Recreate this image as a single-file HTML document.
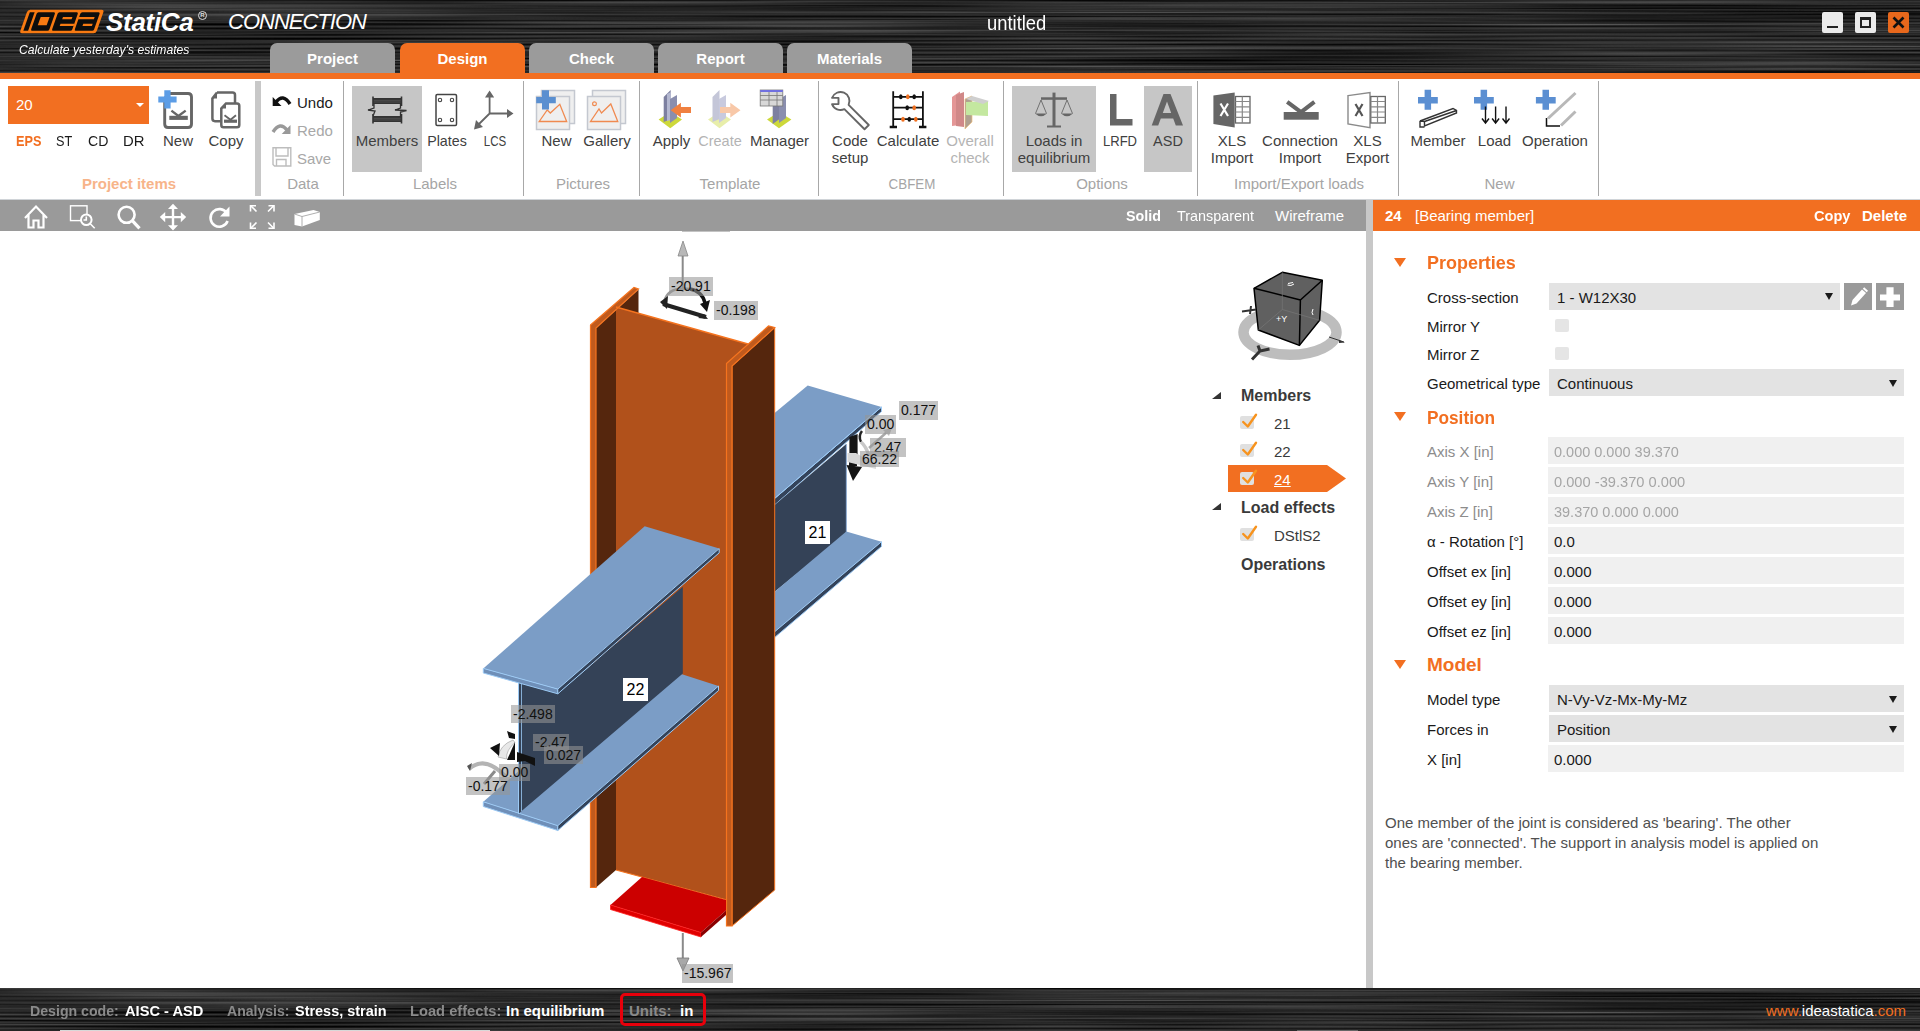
<!DOCTYPE html>
<html><head><meta charset="utf-8">
<style>
*{margin:0;padding:0;box-sizing:border-box}
html,body{width:1920px;height:1031px;overflow:hidden;background:#fff;font-family:"Liberation Sans",sans-serif;position:relative}
.a{position:absolute;white-space:nowrap}
.c{transform:translateX(-50%)}
#title{left:0;top:0;width:1920px;height:73px}
#oline{left:0;top:73px;width:1920px;height:6px;background:#f26f21}
.tab{top:43px;height:30px;width:125px;border-radius:7px 7px 0 0;background:#9b9b9b;color:#fff;font-weight:bold;font-size:15px;text-align:center;line-height:31px}
.tab.on{background:#f26f21}
#ribbon{left:0;top:79px;width:1920px;height:121px;background:#fff;border-bottom:1px solid #d0d4d8}
.sep{top:81px;width:1px;height:115px;background:#a8a8a8}
.rt{font-size:15px;color:#404040;line-height:17px}
.gl{font-size:15px;color:#a5a5a5;top:175px;line-height:17px}
.hl{background:#c6c6c6}
#vtb{left:0;top:200px;width:1366px;height:31px;background:#9a9a9a}
#split{left:1366px;top:200px;width:7px;height:788px;background:#c8c8c8}
#phdr{left:1373px;top:200px;width:547px;height:31px;background:#f26f21}
.pt{font-size:15px;color:#1a1a1a}
.sec{font-size:19px;font-weight:bold;color:#f26f21}
.tri{width:0;height:0;border-left:6.5px solid transparent;border-right:6.5px solid transparent;border-top:9px solid #f26f21}
.dd{left:1549px;width:355px;height:27px;background:#e3e3e3}
.tb{left:1548px;width:356px;height:27px;background:#f0f0f0}
.ddarr{width:0;height:0;border-left:4.4px solid transparent;border-right:4.4px solid transparent;border-top:7px solid #1a1a1a}
#status{left:0;top:988px;width:1920px;height:43px}
.st{font-size:15px;font-weight:bold;top:1002px}
.lbl{background:rgba(149,149,149,.57);color:#111;font-family:"Liberation Sans",sans-serif;font-size:14px;line-height:19px;padding:0 2px}
</style></head><body>

<!-- TITLE BAR -->
<svg class="a" style="left:0;top:0" width="1920" height="73"><defs>
<filter id="br" x="0" y="0" width="100%" height="100%" color-interpolation-filters="sRGB">
<feTurbulence type="fractalNoise" baseFrequency="0.002 0.5" numOctaves="3" seed="3"/>
<feColorMatrix type="saturate" values="0"/>
<feComponentTransfer><feFuncR type="linear" slope="0.6" intercept="-0.14"/><feFuncG type="linear" slope="0.6" intercept="-0.14"/><feFuncB type="linear" slope="0.6" intercept="-0.14"/><feFuncA type="linear" slope="0" intercept="1"/></feComponentTransfer>
</filter></defs><rect width="1920" height="73" fill="#000" filter="url(#br)"/></svg>
<div id="oline" class="a"></div>

<!-- logo -->
<svg class="a" style="left:0;top:0" width="420" height="70" viewBox="0 0 420 70">
<g transform="translate(0,33.2) skewX(-19.3) translate(0,-33.2)">
<rect x="19.5" y="9.7" width="76.5" height="23.5" rx="2.5" fill="#f77a12"/>
<rect x="22.5" y="12.3" width="4.8" height="18.5" fill="#0d0d0d"/>
<rect x="29.8" y="12.3" width="18.3" height="18.5" rx="1.5" fill="#0d0d0d"/>
<rect x="35" y="16.9" width="8.9" height="8.4" fill="#f77a12"/>
<rect x="50.8" y="12.3" width="20.2" height="18.5" rx="1.5" fill="#0d0d0d"/>
<rect x="57.3" y="16.9" width="9.4" height="2.4" fill="#f77a12"/>
<rect x="57.2" y="23.8" width="14" height="2.3" fill="#f77a12"/>
<rect x="73.5" y="12.3" width="19.3" height="18.5" rx="1.5" fill="#0d0d0d"/>
<rect x="73" y="16.9" width="16" height="2.4" fill="#f77a12"/>
<rect x="80" y="23.8" width="9.4" height="2.3" fill="#f77a12"/>
</g>
</svg>
<div class="a" style="left:106px;top:6.5px;font-size:26px;line-height:30px;font-weight:bold;font-style:italic;color:#fff;letter-spacing:-0.3px">StatiCa</div>
<div class="a" style="left:198px;top:11px;width:9px;height:9px;border:1.2px solid #ddd;border-radius:50%;font-size:6px;line-height:7px;text-align:center;color:#ddd;font-weight:bold">R</div>
<div class="a" style="left:228px;top:9px;font-size:22px;line-height:26px;font-style:italic;color:#fff;letter-spacing:-1px">CONNECTION</div>
<div class="a" id="tag" style="left:19px;top:42px;font-size:13px;line-height:15px;font-style:italic;color:#fff;transform-origin:0 0;transform:scaleX(0.934)">Calculate yesterday's estimates</div>
<!-- window buttons -->
<div class="a" style="left:1822px;top:12px;width:21px;height:21px;background:#ebebeb;border-radius:2px"></div>
<div class="a" style="left:1827px;top:26px;width:11px;height:2px;background:#222"></div>
<div class="a" style="left:1855px;top:12px;width:21px;height:21px;background:#ebebeb;border-radius:2px"></div>
<div class="a" style="left:1860px;top:17px;width:11px;height:11px;border:2px solid #222;border-top-width:3px"></div>
<div class="a" style="left:1888px;top:12px;width:21px;height:21px;background:#e8681c;border-radius:2px"></div>
<svg class="a" style="left:1888px;top:12px" width="21" height="21"><path d="M5.5 5.5 L15.5 15.5 M15.5 5.5 L5.5 15.5" stroke="#111" stroke-width="2.6"/></svg>

<div class="a tab" style="left:270px">Project</div>
<div class="a tab on" style="left:400px">Design</div>
<div class="a tab" style="left:529px">Check</div>
<div class="a tab" style="left:658px">Report</div>
<div class="a tab" style="left:787px">Materials</div>

<div class="a" style="left:987px;top:11.5px;font-size:20px;line-height:22px;color:#fff;transform-origin:0 0;transform:scaleX(0.92)">untitled</div>

<!-- RIBBON -->
<div id="ribbon" class="a"></div>


<div class="a hl" style="left:352px;top:86px;width:70px;height:86px"></div>
<div class="a hl" style="left:1012px;top:86px;width:84px;height:86px"></div>
<div class="a hl" style="left:1144px;top:86px;width:48px;height:86px"></div>
<!-- ribbon icons -->
<svg class="a" style="left:0;top:0" width="1600" height="200" viewBox="0 0 1600 200">
<!-- New (project) -->
<path d="M169 93.5 H188 Q191.5 93.5 191.5 97 V124 Q191.5 127.5 188 127.5 H168 Q164.7 127.5 164.7 124 V98.5 Z" fill="none" stroke="#666" stroke-width="2.9"/>
<path d="M171.4 110.6 L178.4 116 L185.7 110.6" fill="none" stroke="#666" stroke-width="2.4"/>
<rect x="169.3" y="115.8" width="18.5" height="4.1" fill="#666"/>
<path d="M164.3 90.3 H170.6 V96.5 H176.6 V102.5 H170.6 V108.5 H164.3 V102.5 H158.3 V96.5 H164.3 Z" fill="#5c9de6"/>
<!-- Copy -->
<path d="M217 92.5 H232.5 Q235 92.5 235 95 V103 M221 121.2 H215 Q212.4 121.2 212.4 118.6 V98.5 L217 92.5" fill="none" stroke="#666" stroke-width="2.5"/>
<path d="M212.4 98.5 L217 92.5 V98.5 Z" fill="#666"/>
<path d="M226 103.5 H237 Q239.3 103.5 239.3 105.8 V125 Q239.3 127.3 237 127.3 H223.5 Q221.3 127.3 221.3 125 V108.5 Z" fill="#fff" stroke="#666" stroke-width="2.5"/>
<path d="M221.3 108.5 L226 103.5 V108.5 Z" fill="#666"/>
<path d="M224.5 115.2 L230.5 119.8 L236 115.2" fill="none" stroke="#666" stroke-width="1.8"/>
<rect x="224" y="119.6" width="13" height="3.2" fill="#666"/>
<!-- Undo / Redo / Save -->
<path d="M276 102 Q283 93 290 104" fill="none" stroke="#111" stroke-width="3.4"/>
<path d="M272.7 97 L272.7 106 L281.5 106 Z" fill="#111"/>
<path d="M287 130 Q280 121 273 132" fill="none" stroke="#999" stroke-width="3.4"/>
<path d="M290.5 125 L290.5 134 L281.7 134 Z" fill="#999"/>
<path d="M273 147.8 H290.8 V166 H274.5 L273 164.5 Z M276 148 V156 H288 V148 M276.5 166 V159.5 H286 V166" fill="none" stroke="#bdbdbd" stroke-width="1.4"/>
<!-- Members -->
<rect x="373" y="98" width="28.5" height="6" fill="#333"/>
<rect x="373" y="116" width="28.5" height="6" fill="#333"/>
<path d="M373 100.3 H401.5 M373 102 H401.5 M373 118.3 H401.5 M373 120 H401.5" stroke="#5a5a5a" stroke-width="0.7"/>
<path d="M373 96.5 V106 M401.5 96.5 V106 M373 114 V123.5 M401.5 114 V123.5" stroke="#333" stroke-width="1.6"/>
<path d="M374 104 V108 L368 110 L375 111 L373 116 M400.5 104 V108 L395 110 L406.5 110.5 L400.5 112 V116" fill="none" stroke="#333" stroke-width="1.3"/>
<!-- Plates -->
<rect x="436" y="94.5" width="20.5" height="31" rx="1.2" fill="#fff" stroke="#444" stroke-width="1.5"/>
<g fill="none" stroke="#444" stroke-width="1.1"><circle cx="440" cy="100" r="1.7"/><circle cx="452" cy="100" r="1.7"/><circle cx="440" cy="120" r="1.7"/><circle cx="452" cy="120" r="1.7"/></g>
<!-- LCS -->
<path d="M489.6 113.5 V96 M489.6 113.5 H508 M489.6 113.5 L478 125" fill="none" stroke="#666" stroke-width="1.8"/>
<path d="M485 97.5 L489.6 90.5 L494.2 97.5 Z M507 109 L513.5 113.5 L507 118 Z M476 120 L474 129.5 L483 127 Z" fill="#666"/>
<!-- Pictures New -->
<rect x="541.5" y="90.5" width="33" height="33" fill="#efefef" stroke="#c4c8d0" stroke-width="1.5"/>
<rect x="536.5" y="96.5" width="33" height="33" fill="#efefef" stroke="#c4c8d0" stroke-width="1.5"/>
<path d="M539.2 121.5 L547.2 110 L550.3 113 L559.8 104.3 L566.7 121.5 Z" fill="none" stroke="#f08a50" stroke-width="1.3"/>
<path d="M542 90.3 H549 V96.9 H555.8 V103.2 H549 V109.5 H542 V103.2 H536.2 V96.9 H542 Z" fill="#5a8fd0"/>
<!-- Gallery -->
<rect x="592.5" y="90.5" width="33" height="33" fill="#efefef" stroke="#c4c8d0" stroke-width="1.5"/>
<rect x="587.5" y="96.5" width="33" height="33" fill="#efefef" stroke="#c4c8d0" stroke-width="1.5"/>
<circle cx="594.5" cy="103.8" r="1.9" fill="none" stroke="#f08a50" stroke-width="1.2"/>
<path d="M590.5 121.5 L599 109 L601.5 113 L610.8 104 L617.8 121.5 Z" fill="none" stroke="#f08a50" stroke-width="1.3"/>
<!-- Apply -->
<path d="M658.6 119.6 L670.3 112 L682 119.6 L670.3 128.2 Z" fill="#cdd83a"/>
<path d="M663.7 97 L670.7 89.9 V119 L663.7 122 Z" fill="#7d80a0"/>
<path d="M667 94 L671 92 V120 L667 121 Z" fill="#b4b8d0"/>
<path d="M670 98.9 L677 95 V118 L670 123 Z" fill="#8a8eae"/>
<path d="M670.7 110.2 L680.9 102.8 V107 H691 V113 H680.9 V117.5 Z" fill="#f08040"/>
<!-- Create -->
<path d="M708 119.6 L719.5 112 L731 119.6 L719.5 128.2 Z" fill="#e8eeaa"/>
<path d="M712.5 97 L719.5 89.9 V119 L712.5 122 Z" fill="#c4c6d8"/>
<path d="M719 98.9 L726 95 V118 L719 123 Z" fill="#c8cade"/>
<path d="M740.5 110.2 L730.3 102.8 V107 H720 V113 H730.3 V117.5 Z" fill="#f8c8a8"/>
<!-- Manager -->
<path d="M767 119.6 L779 112 L791.4 119.6 L779 128.2 Z" fill="#cdd83a"/>
<path d="M772.7 100 L779.5 95 V119 L772.7 124 Z" fill="#7d80a0"/>
<path d="M779 99 L786 95 V118 L779 123 Z" fill="#8a8eae"/>
<rect x="760.2" y="90" width="22.6" height="16" fill="#d8d8d8" stroke="#777" stroke-width="0.8"/>
<rect x="760.2" y="90" width="22.6" height="2" fill="#7070e0"/>
<path d="M760.2 95.5 H782.8 M760.2 100 H782.8 M769 92 V106 M777 92 V106" stroke="#777" stroke-width="0.8"/>
<!-- Code setup wrench -->
<path d="M848.62 104.88 A9 9 0 1 0 832.05 97.9 L838.5 97.9 L838.5 104.1 L832.05 104.1 A9 9 0 0 0 844.38 109.12 L864.54 129.28 L868.78 125.04 Z" fill="none" stroke="#666" stroke-width="1.9" stroke-linejoin="round"/>
<!-- Calculate abacus -->
<path d="M893.2 91.3 V127 M922.9 91.3 V127 M893.2 96.8 H922.9 M893.2 107.7 H922.9 M893.2 119.2 H922.9" stroke="#111" stroke-width="1.8"/>
<path d="M889.7 127 H897 M919 127 H926.4" stroke="#111" stroke-width="2.5"/>
<g fill="#111"><ellipse cx="900.8" cy="96.8" rx="1.8" ry="2.5"/><ellipse cx="914.2" cy="96.8" rx="1.8" ry="2.5"/><ellipse cx="907.2" cy="107.7" rx="1.8" ry="2.5"/><ellipse cx="909.3" cy="119.2" rx="1.8" ry="2.5"/></g>
<g fill="#f07020"><ellipse cx="907.8" cy="96.8" rx="1.8" ry="2.5"/><ellipse cx="914.2" cy="107.7" rx="1.8" ry="2.5"/><ellipse cx="903" cy="119.2" rx="1.8" ry="2.5"/><ellipse cx="915.8" cy="119.2" rx="1.8" ry="2.5"/></g>
<!-- Overall check -->
<path d="M952 97 L960 91.5 V125 L952 126 Z" fill="#e49696"/>
<path d="M956 95 L964 92 V127 L956 126 Z" fill="#d08888"/>
<path d="M965 99 L972 96 V122 L965 129 Z" fill="#b0a090" stroke="#f0c080" stroke-width="0.7"/>
<path d="M966 102 L988 101 L988 116 L966 115 Z" fill="#c4e8a0"/>
<path d="M966 99 L972 96 L989 101 L983 104 Z" fill="#cfcfcf"/>
<!-- Scale -->
<g fill="#666"><rect x="1052.5" y="92.6" width="3" height="34"/><rect x="1041" y="97.3" width="26" height="2.5"/><rect x="1047" y="125.5" width="14" height="2"/></g>
<path d="M1041 100 L1035.5 113.5 M1041 100 L1046.5 113.5 M1067 100 L1061.5 113.5 M1067 100 L1072.5 113.5" stroke="#666" stroke-width="0.9" fill="none"/>
<path d="M1035 113.5 H1047 Q1041 119 1035 113.5 Z M1061 113.5 H1073 Q1067 119 1061 113.5 Z" fill="#666"/>
<!-- L and A -->
<path d="M1110 94 H1116.5 V119 H1132.5 V125.5 H1110 Z" fill="#666"/>
<path d="M1163.5 94 H1170.5 L1183 125.5 H1175.8 L1173.2 118.5 H1160.8 L1158.2 125.5 H1151.7 Z M1162.8 113 H1171.2 L1167 101.5 Z" fill="#666" fill-rule="evenodd"/>
<!-- XLS Import -->
<path d="M1213.4 95.4 L1234.7 92.4 V127.6 L1213.4 124.1 Z" fill="#666"/>
<path d="M1220.5 103.5 L1228 116 M1228 103.5 L1220.5 116" stroke="#fff" stroke-width="2.2"/>
<rect x="1235.5" y="96.5" width="14.5" height="26.5" fill="#fff" stroke="#666" stroke-width="1.3"/>
<path d="M1235.5 101.5 H1250 M1235.5 106.8 H1250 M1235.5 112 H1250 M1235.5 117.3 H1250 M1242.3 96.5 V123" stroke="#888" stroke-width="1.2"/>
<!-- Connection import -->
<path d="M1287.2 101.8 L1301 112.2 L1314.4 101.8" fill="none" stroke="#666" stroke-width="4"/>
<rect x="1283.7" y="112" width="35" height="7.7" fill="#666"/>
<!-- XLS Export -->
<path d="M1348 95.6 L1370 92.5 V127.7 L1348 124 Z" fill="#fff" stroke="#8a8a8a" stroke-width="1.4"/>
<path d="M1355.5 104 L1362.5 116 M1362.5 104 L1355.5 116" stroke="#555" stroke-width="2.2"/>
<rect x="1370.8" y="96.5" width="14.5" height="26.5" fill="#fff" stroke="#666" stroke-width="1.3"/>
<path d="M1370.8 101.5 H1385.3 M1370.8 106.8 H1385.3 M1370.8 112 H1385.3 M1370.8 117.3 H1385.3 M1377.5 96.5 V123" stroke="#888" stroke-width="1.2"/>
<!-- Member -->
<path d="M1420 121 L1453 108.5 L1456.5 110.5 V113 L1424.5 126 V121.5 L1420 121 Z M1424.5 121.5 L1456.5 110.5 M1420 121 V127 H1424.5" fill="none" stroke="#333" stroke-width="1.4"/>
<path d="M1424.6 89.8 H1431.1 V96.9 H1437.8 V103.4 H1431.1 V109.7 H1424.6 V103.4 H1418 V96.9 H1424.6 Z" fill="#5b8fd2"/>
<!-- Load -->
<path d="M1480.6 89.8 H1487.1 V96.9 H1493.8 V103.4 H1487.1 V109.7 H1480.6 V103.4 H1474 V96.9 H1480.6 Z" fill="#5b8fd2"/>
<path d="M1485.5 106.5 V123 M1495.6 106.5 V123 M1506 106.5 V123 M1482 118.5 L1485.5 123 L1489 118.5 M1492.1 118.5 L1495.6 123 L1499.1 118.5 M1502.5 118.5 L1506 123 L1509.5 118.5" fill="none" stroke="#111" stroke-width="1.4"/>
<!-- Operation -->
<path d="M1542.5 89.8 H1549 V96.9 H1555.7 V103.4 H1549 V109.7 H1542.5 V103.4 H1535.9 V96.9 H1542.5 Z" fill="#5b8fd2"/>
<path d="M1548 118.5 L1575.5 93 M1561 125.5 L1575.5 111.5" stroke="#b8b8b8" stroke-width="3"/>
<path d="M1546.5 118 V126 H1560" fill="none" stroke="#111" stroke-width="1.5"/>
</svg>

<!-- ribbon content -->
<div class="a" style="left:8px;top:86px;width:141px;height:38px;background:#f26f21"></div>
<div class="a" style="left:16px;top:96px;font-size:15px;color:#fff;line-height:17px">20</div>
<div class="a" style="left:136px;top:103px;width:0;height:0;border-left:4px solid transparent;border-right:4px solid transparent;border-top:4px solid #fff"></div>
<div class="a rt" style="left:16px;top:132px;color:#f26f21;font-weight:bold;transform-origin:0 0;transform:scaleX(0.846)">EPS</div>
<div class="a rt" style="left:56px;top:132px;color:#1a1a1a;transform-origin:0 0;transform:scaleX(0.847)">ST</div>
<div class="a rt" style="left:88px;top:132px;color:#1a1a1a;transform-origin:0 0;transform:scaleX(0.941)">CD</div>
<div class="a rt" style="left:123px;top:132px;color:#1a1a1a;transform-origin:0 0;transform:scaleX(0.99)">DR</div>
<div class="a rt c" style="left:178px;top:132px">New</div>
<div class="a rt c" style="left:226px;top:132px">Copy</div>
<div class="a gl c" style="left:129px;color:#f7b48a;font-weight:bold">Project items</div>
<div class="a" style="left:255px;top:81px;width:6px;height:115px;background:#c8c8c8"></div>

<div class="a rt" style="left:297px;top:94px;color:#1a1a1a">Undo</div>
<div class="a rt" style="left:297px;top:122px;color:#a8a8a8">Redo</div>
<div class="a rt" style="left:297px;top:150px;color:#a8a8a8">Save</div>
<div class="a gl c" style="left:303px">Data</div>
<div class="a sep" style="left:343px"></div>

<div class="a rt c" style="left:387px;top:132px">Members</div>
<div class="a rt c" style="left:446.5px;top:132px;transform:translateX(-50%) scaleX(0.95)">Plates</div>
<div class="a rt c" style="left:494.5px;top:132px;transform:translateX(-50%) scaleX(0.769)">LCS</div>
<div class="a gl c" style="left:435px">Labels</div>
<div class="a sep" style="left:523px"></div>

<div class="a rt c" style="left:556.5px;top:132px">New</div>
<div class="a rt c" style="left:607px;top:132px">Gallery</div>
<div class="a gl c" style="left:583px">Pictures</div>
<div class="a sep" style="left:639px"></div>

<div class="a rt c" style="left:671.5px;top:132px">Apply</div>
<div class="a rt c" style="left:720px;top:132px;color:#b4b4b4;transform:translateX(-50%) scaleX(0.966)">Create</div>
<div class="a rt c" style="left:779.5px;top:132px">Manager</div>
<div class="a gl c" style="left:730px">Template</div>
<div class="a sep" style="left:818px"></div>

<div class="a rt c" style="left:850px;top:132px;text-align:center">Code<br>setup</div>
<div class="a rt c" style="left:908px;top:132px">Calculate</div>
<div class="a rt c" style="left:970px;top:132px;color:#b4b4b4;text-align:center">Overall<br>check</div>
<div class="a gl c" style="left:912px;transform:translateX(-50%) scaleX(0.892)">CBFEM</div>
<div class="a sep" style="left:1003px"></div>

<div class="a rt c" style="left:1054px;top:132px;text-align:center">Loads in<br>equilibrium</div>
<div class="a rt c" style="left:1120px;top:132px;transform:translateX(-50%) scaleX(0.87)">LRFD</div>
<div class="a rt c" style="left:1168px;top:132px;transform:translateX(-50%) scaleX(0.966)">ASD</div>
<div class="a gl c" style="left:1102px">Options</div>
<div class="a sep" style="left:1197px"></div>

<div class="a rt c" style="left:1232px;top:132px;text-align:center">XLS<br>Import</div>
<div class="a rt c" style="left:1300px;top:132px;text-align:center">Connection<br>Import</div>
<div class="a rt c" style="left:1367.5px;top:132px;text-align:center">XLS<br>Export</div>
<div class="a gl c" style="left:1299px">Import/Export loads</div>
<div class="a sep" style="left:1398px"></div>

<div class="a rt c" style="left:1438px;top:132px">Member</div>
<div class="a rt c" style="left:1494.5px;top:132px">Load</div>
<div class="a rt c" style="left:1555px;top:132px">Operation</div>
<div class="a gl c" style="left:1499.5px">New</div>
<div class="a sep" style="left:1598px"></div>


<!-- 3D MODEL -->
<svg class="a" style="left:0;top:0" width="1366" height="988" viewBox="0 0 1366 988">
<defs><clipPath id="vp"><rect x="0" y="231" width="1366" height="757"/></clipPath></defs>
<g clip-path="url(#vp)">
<!-- beam 21 behind -->
<g stroke-linejoin="round">
<polygon points="774,413.5 807.7,385.5 881.5,407 774,499" fill="#7b9dc6"/>
<polygon points="881.5,407 881.5,411.5 774,505.5 774,499" fill="#34435a" stroke="#9ccaf5" stroke-width="1"/>
<polygon points="774,505.5 846.3,444 846.3,533.7 774,592.3" fill="#344257"/>
<line x1="846.3" y1="444" x2="846.3" y2="534" stroke="#7fa6d6" stroke-width="0.8"/>
<polygon points="774,592.3 846.3,531.5 881.5,541.7 774,632.3" fill="#7b9dc6"/>
<polygon points="881.5,541.7 881.5,546.5 774,638 774,632.3" fill="#34435a" stroke="#9ccaf5" stroke-width="1"/>
<line x1="774" y1="499" x2="881.5" y2="407" stroke="#9ccaf5" stroke-width="1"/>
</g>
<!-- column -->
<polygon points="596,328 638.5,289.5 638.5,313.5 616,307 616,870 596,887.5" fill="#55260d"/>
<polygon points="616,307 748,344 727,363.5 727,900 616,870" fill="#b1511b"/>
<polygon points="732,366 774.7,327.5 774.7,890 732,926" fill="#55260d" stroke="#f5731e" stroke-width="1"/>
<polygon points="590.5,325 634,287.5 638.5,289 596,328 596,887.5 590.5,887.5" fill="#c05a1d" stroke="#f5731e" stroke-width="1.2"/>
<polygon points="726.5,363.5 768.5,326 774.7,327.5 732,366 732,926 726.5,926" fill="#c05a1d" stroke="#f5731e" stroke-width="1.2"/>
<line x1="616" y1="307" x2="748" y2="344" stroke="#f5731e" stroke-width="1.5"/>
<line x1="616" y1="870" x2="727" y2="900" stroke="#f5731e" stroke-width="1.2"/>
<!-- base plate -->
<polygon points="642,877 726,900 726,910.5 701,932.5 610.5,905" fill="#cc0000"/>
<polygon points="610.5,905 701,932.5 701,937 610.5,909.5" fill="#e00000" stroke="#ff2020" stroke-width="0.8"/>
<polygon points="701,932.5 726,910.5 726,915 701,937" fill="#8a0000"/>
<!-- beam 22 front -->
<polygon points="483.3,801.8 644,662 718.5,686 557.8,825.7" fill="#7b9dc6"/>
<polygon points="483.3,801.8 557.8,825.7 557.8,830.5 483.3,806.5" fill="#6f8fb8" stroke="#9ccaf5" stroke-width="1"/>
<polygon points="557.8,825.7 718.5,686 718.5,690.5 557.8,830.5" fill="#34435a" stroke="#9ccaf5" stroke-width="1"/>
<polygon points="519,682 557.8,693.5 682.8,586.7 682.8,673.6 519,813.3" fill="#344257"/>
<line x1="518.5" y1="680" x2="518.5" y2="814" stroke="#9ccaf5" stroke-width="1"/><line x1="521.5" y1="682" x2="521.5" y2="811" stroke="#9ccaf5" stroke-width="0.8"/>
<polygon points="483.3,668.4 644.7,526.2 719.2,548.6 557.8,689.1" fill="#7b9dc6"/>
<polygon points="483.3,668.4 557.8,689.1 557.8,693.8 483.3,673" fill="#6f8fb8" stroke="#9ccaf5" stroke-width="1"/>
<polygon points="557.8,689.1 719.2,548.6 719.2,552.8 557.8,693.8" fill="#34435a" stroke="#9ccaf5" stroke-width="1"/>
<!-- arrows -->
<line x1="682.7" y1="250" x2="682.7" y2="292" stroke="#8a8a8a" stroke-width="2"/>
<polygon points="678,256 683,241 688,256" fill="#b8b8b8" stroke="#888" stroke-width="0.8"/>
<line x1="682.8" y1="933" x2="682.8" y2="962" stroke="#8a8a8a" stroke-width="2"/>
<polygon points="677,958 683,971 689,958" fill="#a8a8a8" stroke="#777" stroke-width="0.8"/>
</g>
</svg>
<!-- moment arrows -->
<svg class="a" style="left:0;top:0" width="960" height="800" viewBox="0 0 960 800">
<path d="M664 302 Q668 286 690 289 Q702 291 705 303" fill="none" stroke="#999" stroke-width="2.5"/>
<path d="M690 289 Q702 291 705 303" fill="none" stroke="#111" stroke-width="3.5"/>
<path d="M700 304 L710 300 L707 312 Z" fill="#111"/>
<path d="M663 304 L706 317" stroke="#222" stroke-width="4"/>
<path d="M660 302 L668 296 L667 309 Z M704 314 L708 319 L698 318 Z" fill="#222"/>
<path d="M849.4 437 L857.6 434 L857.6 456 L849.4 458 Z" fill="#151515"/>
<path d="M849 458 L857 458 L857 466 L849 466 Z" fill="#151515"/>
<path d="M846.5 465 L862 467 L853 481 Z" fill="#151515"/>
<path d="M847.5 453 L856 453 L876 465 L876 469 L847.5 462 Z" fill="#d8d8d8"/>
<path d="M862 431 Q858 436 861 442" fill="none" stroke="#222" stroke-width="2.5"/>
<path d="M861 442 Q866 446 869 456" fill="none" stroke="#c8c8c8" stroke-width="3.5"/>
<path d="M869 448 L887 432" stroke="#aaa" stroke-width="2.5"/>
<path d="M883 430 L892 428 L889 436 Z" fill="#bbb"/>
<path d="M507 731 L515 734 L515 739 L509 738 Z" fill="#111"/>
<path d="M498 757 Q500 745 513 740 L515 742.5 Q506 750 506.5 759 Z" fill="#e8e8e8" stroke="#9a9a9a" stroke-width="0.6"/>
<path d="M490 748 L500 743 L499 756 Z" fill="#111"/>
<path d="M507 760 L515 742 L515 760 Z" fill="#111"/>
<path d="M517 752 L535 758 L535 766 L525 761 L517 762 Z" fill="#111"/>
<path d="M469 769 Q485 755 505 776" fill="none" stroke="#b4b4b4" stroke-width="4"/>
<path d="M467 766 L472 763 L470 771 Z" fill="#555"/>
<path d="M484 784 L495 771" stroke="#8a8a8a" stroke-width="3"/>
</svg>
<div class="a lbl" style="left:682px;top:226px;width:48px;height:6px"></div>
<div class="a lbl" style="left:669px;top:277px;height:19px">-20.91</div>
<div class="a lbl" style="left:714px;top:301px;height:19px">-0.198</div>
<div class="a lbl" style="left:899px;top:401px;height:19px">0.177</div>
<div class="a lbl" style="left:865px;top:415px;height:19px">0.00</div>
<div class="a lbl" style="left:870px;top:438px;height:19px;width:36px;padding-left:4px">2.47</div>
<div class="a lbl" style="left:860px;top:451px;height:16px;line-height:16px">66.22</div>
<div class="a lbl" style="left:511px;top:705px;height:18px">-2.498</div>
<div class="a lbl" style="left:533px;top:734px;height:17px;line-height:17px">-2.47</div>
<div class="a lbl" style="left:544px;top:746px;height:18px">0.027</div>
<div class="a lbl" style="left:499px;top:764px;height:17px;line-height:17px">0.00</div>
<div class="a lbl" style="left:466px;top:777px;height:18px">-0.177</div>
<div class="a lbl" style="left:682px;top:964px;height:19px">-15.967</div>
<div class="a" style="left:805px;top:521px;width:25px;height:23px;background:#fff;color:#000;font-size:16px;line-height:23px;text-align:center">21</div>
<div class="a" style="left:623px;top:678px;width:25px;height:23px;background:#fff;color:#000;font-size:16px;line-height:23px;text-align:center">22</div>

<!-- VIEW TOOLBAR -->
<div id="vtb" class="a"></div>
<div id="split" class="a"></div>
<div id="phdr" class="a"></div>


<!-- STATUS -->
<svg class="a" style="left:0;top:988px" width="1920" height="43"><rect width="1920" height="43" fill="#000" filter="url(#br)"/></svg>

<!-- view toolbar text -->
<div class="a" style="left:1126px;top:207px;font-size:15px;color:#fff;font-weight:bold;line-height:17px;transform-origin:0 0;transform:scaleX(0.952)">Solid</div>
<div class="a" style="left:1177px;top:207px;font-size:15px;color:#fff;line-height:17px;transform-origin:0 0;transform:scaleX(0.958)">Transparent</div>
<div class="a" style="left:1275px;top:207px;font-size:15px;color:#fff;line-height:17px">Wireframe</div>

<!-- panel header -->
<div class="a" style="left:1385px;top:207px;font-size:15px;color:#fff;font-weight:bold;line-height:17px">24</div>
<div class="a" style="left:1415px;top:207px;font-size:15px;color:#fff;line-height:17px">[Bearing member]</div>
<div class="a" style="left:1814px;top:207px;font-size:15px;color:#fff;font-weight:bold;line-height:17px;transform-origin:0 0;transform:scaleX(0.972)">Copy</div>
<div class="a" style="left:1862px;top:207px;font-size:15px;color:#fff;font-weight:bold;line-height:17px">Delete</div>

<!-- Properties -->
<div class="a tri" style="left:1394px;top:258px"></div>
<div class="a sec" style="left:1427px;top:252px;line-height:22px;transform-origin:0 0;transform:scaleX(0.945)">Properties</div>
<div class="a pt" style="left:1427px;top:289px;line-height:17px">Cross-section</div>
<div class="a dd" style="top:283px;width:291px"></div>
<div class="a pt" style="left:1557px;top:289px;line-height:17px">1 - W12X30</div>
<div class="a ddarr" style="left:1825px;top:293px"></div>
<div class="a" style="left:1844px;top:283px;width:28px;height:27px;background:#9a9a9a"></div>
<div class="a" style="left:1876px;top:283px;width:28px;height:27px;background:#9a9a9a"></div>
<div class="a pt" style="left:1427px;top:318px;line-height:17px">Mirror Y</div>
<div class="a" style="left:1555px;top:319px;width:14px;height:13px;background:#e5e5e5;border-radius:2px"></div>
<div class="a pt" style="left:1427px;top:346px;line-height:17px">Mirror Z</div>
<div class="a" style="left:1555px;top:347px;width:14px;height:13px;background:#e5e5e5;border-radius:2px"></div>
<div class="a pt" style="left:1427px;top:375px;line-height:17px">Geometrical type</div>
<div class="a dd" style="top:369px"></div>
<div class="a pt" style="left:1557px;top:375px;line-height:17px">Continuous</div>
<div class="a ddarr" style="left:1889px;top:380px"></div>

<!-- Position -->
<div class="a tri" style="left:1394px;top:412px"></div>
<div class="a sec" style="left:1427px;top:407px;line-height:22px;transform-origin:0 0;transform:scaleX(0.907)">Position</div>
<div class="a tb" style="top:437px"></div>
<div class="a tb" style="top:467px"></div>
<div class="a tb" style="top:497px"></div>
<div class="a tb" style="top:527px"></div>
<div class="a tb" style="top:557px"></div>
<div class="a tb" style="top:587px"></div>
<div class="a tb" style="top:617px"></div>
<div class="a pt" style="left:1427px;top:443px;line-height:17px;color:#8c8c8c">Axis X [in]</div>
<div class="a pt" style="left:1554px;top:443px;line-height:17px;color:#a5a5a5;transform-origin:0 0;transform:scaleX(0.966)">0.000 0.000 39.370</div>
<div class="a pt" style="left:1427px;top:473px;line-height:17px;color:#8c8c8c">Axis Y [in]</div>
<div class="a pt" style="left:1554px;top:473px;line-height:17px;color:#a5a5a5;transform-origin:0 0;transform:scaleX(0.977)">0.000 -39.370 0.000</div>
<div class="a pt" style="left:1427px;top:503px;line-height:17px;color:#8c8c8c">Axis Z [in]</div>
<div class="a pt" style="left:1554px;top:503px;line-height:17px;color:#a5a5a5;transform-origin:0 0;transform:scaleX(0.966)">39.370 0.000 0.000</div>
<div class="a pt" style="left:1427px;top:533px;line-height:17px">&alpha; - Rotation [&deg;]</div>
<div class="a pt" style="left:1554px;top:533px;line-height:17px">0.0</div>
<div class="a pt" style="left:1427px;top:563px;line-height:17px">Offset ex [in]</div>
<div class="a pt" style="left:1554px;top:563px;line-height:17px">0.000</div>
<div class="a pt" style="left:1427px;top:593px;line-height:17px">Offset ey [in]</div>
<div class="a pt" style="left:1554px;top:593px;line-height:17px">0.000</div>
<div class="a pt" style="left:1427px;top:623px;line-height:17px">Offset ez [in]</div>
<div class="a pt" style="left:1554px;top:623px;line-height:17px">0.000</div>

<!-- Model -->
<div class="a tri" style="left:1394px;top:660px"></div>
<div class="a sec" style="left:1427px;top:654px;line-height:22px">Model</div>
<div class="a pt" style="left:1427px;top:691px;line-height:17px">Model type</div>
<div class="a dd" style="top:685px"></div>
<div class="a pt" style="left:1557px;top:691px;line-height:17px">N-Vy-Vz-Mx-My-Mz</div>
<div class="a ddarr" style="left:1889px;top:696px"></div>
<div class="a pt" style="left:1427px;top:721px;line-height:17px">Forces in</div>
<div class="a dd" style="top:715px"></div>
<div class="a pt" style="left:1557px;top:721px;line-height:17px">Position</div>
<div class="a ddarr" style="left:1889px;top:726px"></div>
<div class="a pt" style="left:1427px;top:751px;line-height:17px">X [in]</div>
<div class="a tb" style="top:745px"></div>
<div class="a pt" style="left:1554px;top:751px;line-height:17px">0.000</div>

<div class="a" style="left:1385px;top:813px;font-size:15px;line-height:20px;color:#505050;white-space:normal;width:440px">One member of the joint is considered as 'bearing'. The other ones are 'connected'. The support in analysis model is applied on the bearing member.</div>

<!-- tree -->
<div class="a" style="left:1212px;top:392px;width:0;height:0;border-left:9px solid transparent;border-bottom:7px solid #333"></div>
<div class="a" style="left:1241px;top:387px;font-size:16px;font-weight:bold;color:#3a3a3a;line-height:17px">Members</div>
<div class="a" style="left:1240px;top:416px;width:14px;height:13px;background:#e0e0e0;border-radius:2px"></div>
<div class="a" style="left:1274px;top:415px;font-size:15px;color:#3a3a3a;line-height:17px">21</div>
<div class="a" style="left:1240px;top:444px;width:14px;height:13px;background:#e0e0e0;border-radius:2px"></div>
<div class="a" style="left:1274px;top:443px;font-size:15px;color:#3a3a3a;line-height:17px">22</div>
<svg class="a" style="left:1228px;top:465px" width="120" height="28"><polygon points="0,0 99,0 118,13.5 99,27 0,27" fill="#f26f21"/></svg>
<div class="a" style="left:1240px;top:472px;width:14px;height:13px;background:#e0e0e0;border-radius:2px"></div>
<div class="a" style="left:1274px;top:471px;font-size:15px;color:#fff;line-height:17px;text-decoration:underline">24</div>
<div class="a" style="left:1212px;top:503px;width:0;height:0;border-left:9px solid transparent;border-bottom:7px solid #333"></div>
<div class="a" style="left:1241px;top:499px;font-size:16px;font-weight:bold;color:#3a3a3a;line-height:17px">Load effects</div>
<div class="a" style="left:1240px;top:528px;width:14px;height:13px;background:#e0e0e0;border-radius:2px"></div>
<div class="a" style="left:1274px;top:527px;font-size:15px;color:#3a3a3a;line-height:17px">DStlS2</div>
<div class="a" style="left:1241px;top:556px;font-size:16px;font-weight:bold;color:#3a3a3a;line-height:17px">Operations</div>

<!-- status -->
<div class="a st" style="left:30px;color:#8a8a8a;transform-origin:0 0;transform:scaleX(0.943)">Design code:</div>
<div class="a st" style="left:125px;color:#fff;transform-origin:0 0;transform:scaleX(0.977)">AISC - ASD</div>
<div class="a st" style="left:227px;color:#8a8a8a;transform-origin:0 0;transform:scaleX(0.936)">Analysis:</div>
<div class="a st" style="left:295px;color:#fff;transform-origin:0 0;transform:scaleX(0.963)">Stress, strain</div>
<div class="a st" style="left:410px;color:#8a8a8a;transform-origin:0 0;transform:scaleX(0.979)">Load effects:</div>
<div class="a st" style="left:506px;color:#fff">In equilibrium</div>
<div class="a st" style="left:629px;color:#8a8a8a;transform-origin:0 0;transform:scaleX(1.0)">Units:</div>
<div class="a st" style="left:680px;color:#fff">in</div>
<div class="a" style="left:620px;top:993px;width:86px;height:33px;border:3px solid #e8000b;border-radius:5px"></div>
<div class="a" style="left:1766px;top:1002px;font-size:15px;color:#fff;line-height:17px"><span style="color:#f26f21">www.</span>ideastatica<span style="color:#f26f21">.com</span></div>

<!-- toolbar icons -->
<svg class="a" style="left:0;top:199px" width="340" height="32" viewBox="0 199 340 32">
<g fill="none" stroke="#fff" stroke-width="2.2" stroke-linejoin="miter">
<path d="M25 218 L36 206.5 L47 218 M28.5 214.5 V227.5 H33.5 V220.5 H38.5 V227.5 H43.5 V214.5"/>
</g>
<rect x="70.5" y="205.8" width="16.5" height="14.8" fill="none" stroke="#fff" stroke-width="1.4"/>
<circle cx="86.3" cy="219.8" r="5.3" fill="#9a9a9a" stroke="#fff" stroke-width="2"/>
<path d="M86.3 216.5 V220 H83.5 M90 223.5 L94.7 228.3" fill="none" stroke="#fff" stroke-width="1.6"/>
<circle cx="126.6" cy="214.8" r="8" fill="none" stroke="#fff" stroke-width="2.6"/>
<path d="M132.3 220.6 L139.5 228.4" stroke="#fff" stroke-width="3.2"/>
<path d="M173 206 V228 M162 217.1 H184" stroke="#fff" stroke-width="2.4"/>
<path d="M168 209 L173 203.8 L178 209 Z M168 225.2 L173 230.4 L178 225.2 Z M165.2 212 L159.8 217.1 L165.2 222.2 Z M180.8 212 L186.2 217.1 L180.8 222.2 Z" fill="#fff"/>
<path d="M226.8 213.2 A8.8 8.8 0 1 0 227.6 221" fill="none" stroke="#fff" stroke-width="2.6"/>
<path d="M229.5 206.5 V216.5 H220 Z" fill="#fff"/>
<path d="M251 206 L256.5 211.5 M273.5 206 L268 211.5 M251 228 L256.5 222.5 M273.5 228 L268 222.5" stroke="#fff" stroke-width="1.6"/>
<path d="M250.5 211.5 V205.8 H256 M268.5 205.8 H274 V211.5 M250.5 222.5 V228.2 H256 M268.5 228.2 H274 V222.5" fill="none" stroke="#fff" stroke-width="1.6"/>
<path d="M294.5 214 L313.5 210 L319.8 212 V220 L302 226.5 L294.5 225 Z" fill="#fff"/>
<path d="M302 216.5 V226.5 M294.5 214 L302 216.5 L319.8 212" fill="none" stroke="#9a9a9a" stroke-width="0.8"/>
</svg>

<!-- panel buttons -->
<svg class="a" style="left:1844px;top:283px" width="60" height="28" viewBox="1844 283 60 28">
<path d="M1851 305.5 L1852.5 300 L1862 289.5 L1866 293 L1856.5 303.5 Z" fill="#fff"/>
<path d="M1862.8 288.7 L1864.2 287.3 L1868 290.8 L1866.7 292.2 Z" fill="#fff"/>
<path d="M1880 294.5 H1886.4 V287.3 H1893.6 V294.5 H1900 V300.6 H1893.6 V307 H1886.4 V300.6 H1880 Z" fill="#fff"/>
</svg>

<!-- tree checks -->
<svg class="a" style="left:1236px;top:410px" width="30" height="135" viewBox="1236 410 30 135">
<g fill="none" stroke="#f7931e" stroke-width="2.4" stroke-linecap="round" stroke-linejoin="round">
<path d="M1243.2 422 L1247.8 426.5 L1256 414.8"/>
<path d="M1243.2 450 L1247.8 454.5 L1256 442.8"/>
<path d="M1243.2 478 L1247.8 482.5 L1256 470.8"/>
<path d="M1243.2 534 L1247.8 538.5 L1256 526.8"/>
</g>
</svg>

<!-- view cube -->
<svg class="a" style="left:1230px;top:260px" width="130" height="110" viewBox="1230 260 130 110">
<ellipse cx="1290" cy="332.3" rx="46.5" ry="22.5" fill="none" stroke="#bdbdbd" stroke-width="10.5"/>
<polygon points="1254,288.3 1282.3,272.3 1322.3,280.3 1319.6,320.3 1299.4,345.4 1258.3,330" fill="#606060"/>
<g fill="none" stroke="#000" stroke-width="1.5" stroke-linejoin="round">
<polygon points="1254,288.3 1282.3,272.3 1322.3,280.3 1319.6,320.3 1299.4,345.4 1258.3,330"/>
<path d="M1254 288.3 L1300.4 300 L1322.3 280.3 M1300.4 300 L1299.4 345.4"/>
</g>
<path d="M1282.3 272.3 V309.5 L1258.3 330 M1282.3 309.5 L1319.6 320.3" fill="none" stroke="#777" stroke-width="0.7"/>
<text x="1276" y="322" font-family="Liberation Sans" font-size="9" fill="#fff">+Y</text>
<path d="M1288 283.5 L1293 282.5 M1287.5 285 Q1291 286.5 1294 284" stroke="#fff" stroke-width="1" fill="none"/>
<path d="M1313 309 Q1311 313 1313 315" stroke="#fff" stroke-width="1" fill="none"/>
<path d="M1242 311.5 L1256 309.5 M1251 306 L1250 314" stroke="#333" stroke-width="2"/>
<path d="M1329 337 L1344 342" stroke="#333" stroke-width="1"/>
<path d="M1339 340 L1345 342.5 L1339 343" fill="#333"/>
<path d="M1252 359.5 L1260 351 L1258 345.5 M1260 351 L1269.5 349" fill="none" stroke="#333" stroke-width="3"/>
</svg>



<div class="a" style="left:60px;top:1030px;width:430px;height:1px;background:#d8d8d8"></div>
<div class="a" style="left:1297px;top:1030px;width:61px;height:1px;background:#666"></div>
</body></html>
